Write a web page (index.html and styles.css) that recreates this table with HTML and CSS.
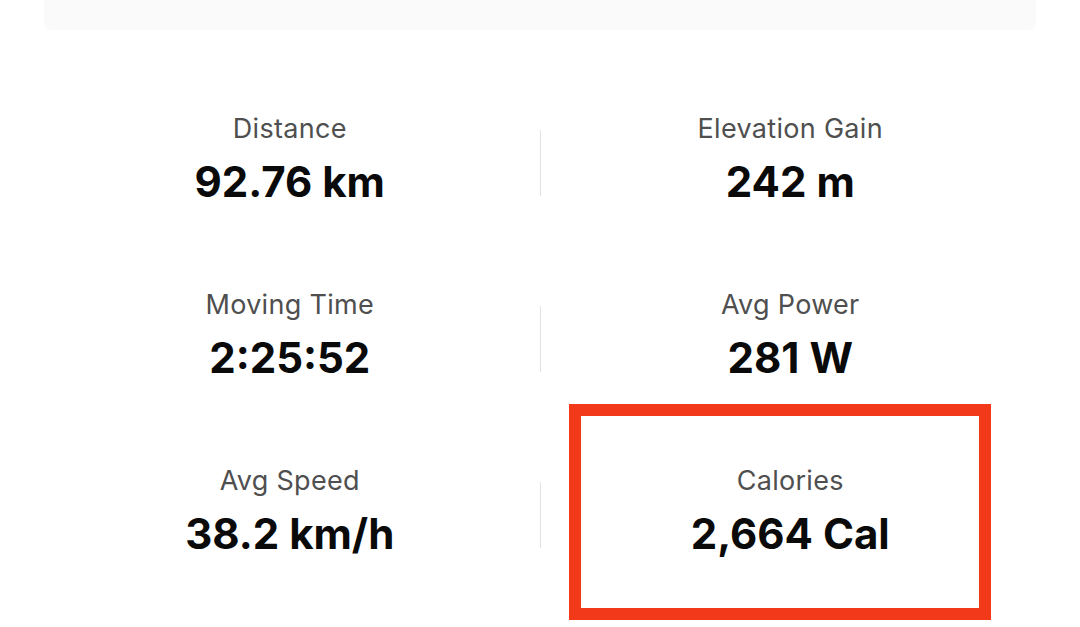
FILE: index.html
```html
<html>
  <head>
    <title>Activity Stats</title>
    <link rel="stylesheet" href="styles.css">
  </head>
  <body>
    <div class="top-card"></div>

    <div class="stats">
      <div class="stat-row">
        <div class="stat">
          <div class="label">Distance</div>
          <div class="value">92.76 km</div>
        </div>
        <div class="divider"></div>
        <div class="stat">
          <div class="label">Elevation Gain</div>
          <div class="value">242 m</div>
        </div>
      </div>

      <div class="stat-row">
        <div class="stat">
          <div class="label">Moving Time</div>
          <div class="value">2:25:52</div>
        </div>
        <div class="divider"></div>
        <div class="stat">
          <div class="label">Avg Power</div>
          <div class="value">281 W</div>
        </div>
      </div>

      <div class="stat-row">
        <div class="stat">
          <div class="label">Avg Speed</div>
          <div class="value">38.2 km/h</div>
        </div>
        <div class="divider"></div>
        <div class="stat highlighted">
          <div class="label">Calories</div>
          <div class="value">2,664 Cal</div>
          <div class="highlight-box"></div>
        </div>
      </div>
    </div>
  </body>
</html>
```

FILE: styles.css
```css
/* General Styling */
body {
  margin: 0;
  font-family: Inter, "Noto Sans", sans-serif;
  background-color: white;
  color: #111;
}

.top-card {
  height: 30px;
  margin: 0 44px;
  background-color: #fafafa;
  border-radius: 0 0 8px 8px;
}

.stats {
  display: flex;
  flex-direction: column;
  gap: 82px;
  margin: 83px 40px 0 40px;
}

.stat-row {
  display: grid;
  grid-template-columns: 1fr 1px 1fr;
  align-items: start;
}

.stat {
  display: flex;
  flex-direction: column;
  align-items: center;
  gap: 12px;
}

.label {
  font-size: 27px;
  line-height: 32px;
  letter-spacing: 0.3px;
  color: #4f4f4f;
}

.value {
  font-size: 42px;
  line-height: 50px;
  font-weight: 700;
  color: #0a0a0a;
}

.divider {
  height: 66px;
  margin-top: 17px;
  background-color: #e2e2e2;
}

/* Annotation box */
.highlighted {
  position: relative;
}

.highlight-box {
  position: absolute;
  left: 28px;
  top: -61px;
  width: 398px;
  height: 192px;
  border: 12px solid #f23a1a;
}
```
